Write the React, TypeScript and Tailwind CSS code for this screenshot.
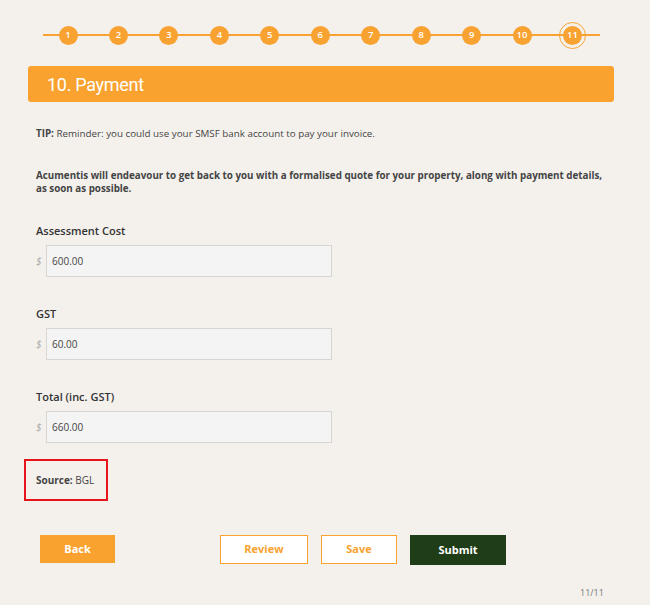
import React from "react";

const steps = [1, 2, 3, 4, 5, 6, 7, 8, 9, 10, 11];

function Field({ label, value }: { label: string; value: string }) {
  return (
    <div className="flex flex-col">
      <div className="text-[11px] font-semibold text-[#333] leading-[14px] h-[14px]">{label}</div>
      <div className="flex items-center mt-[7px]">
        <span className="w-[10px] text-[10px] italic text-[#aaa]">$</span>
        <div className="w-[286px] h-[32px] bg-[#f4f4f4] border border-[#d9d6d2] flex items-center pl-[5px] text-[10px] text-[#444]">
          {value}
        </div>
      </div>
    </div>
  );
}

export default function App() {
  return (
    <div
      className="w-[650px] h-[605px] bg-[#f4f1ed] relative overflow-hidden"
      style={{ fontFamily: '"Open Sans", sans-serif' }}
    >
      {/* stepper */}
      <div className="relative h-[70px]">
        <div className="absolute left-[43px] w-[557px] top-[34px] h-[2px] bg-[#f8a232]" />
        {steps.map((s, i) => (
          <div
            key={s}
            className="absolute top-[26px] w-[19px] h-[19px] rounded-full bg-[#f8a232] text-white text-[9.5px] font-semibold flex items-center justify-center"
            style={{ left: 58.5 + i * 50.45 }}
          >
            {s}
            {s === 11 && (
              <div className="absolute -inset-[4px] rounded-full border border-[#f8a232]" />
            )}
          </div>
        ))}
      </div>

      {/* header */}
      <div className="ml-[28px] mr-[36px] -mt-[4px] h-[36px] rounded-[3px] bg-[#f9a230] flex items-center pl-[19px]">
        <span className="text-white text-[18px] tracking-[-0.3px]" style={{ fontFamily: "Roboto, sans-serif" }}>
          10. Payment
        </span>
      </div>

      <div className="pl-[36px] pr-[20px]">
        <p className="mt-[25px] text-[9.8px] text-[#444] leading-[14px]">
          <span className="font-bold">TIP:</span> Reminder: you could use your SMSF bank account to pay your invoice.
        </p>
        <p className="mt-[28px] text-[9.8px] font-bold text-[#444] leading-[13px] whitespace-nowrap">
          Acumentis will endeavour to get back to you with a formalised quote for your property, along with payment details,
          <br />
          as soon as possible.
        </p>

        <div className="mt-[29px] flex flex-col gap-[30px]">
          <Field label="Assessment Cost" value="600.00" />
          <Field label="GST" value="60.00" />
          <Field label="Total (inc. GST)" value="660.00" />
        </div>
      </div>

      <div className="ml-[24px] mt-[16px] w-[84px] h-[42px] border-2 border-[#e8141c] flex items-center pl-[10px] text-[10px] text-[#444]">
        <span className="font-bold">Source:</span>&nbsp;BGL
      </div>

      <div className="relative h-[30px] mt-[34px]">
        <button className="absolute left-[40px] top-0 w-[75px] h-[28px] bg-[#f9a230] text-white text-[11px] font-bold">
          Back
        </button>
        <button className="absolute left-[220px] top-0 w-[88px] h-[29px] bg-white border border-[#f9a230] text-[#f9a230] text-[11px] font-bold">
          Review
        </button>
        <button className="absolute left-[321px] top-0 w-[76px] h-[29px] bg-white border border-[#f9a230] text-[#f9a230] text-[11px] font-bold">
          Save
        </button>
        <button className="absolute left-[410px] top-0 w-[96px] h-[30px] bg-[#1f3d17] text-white text-[11px] font-bold">
          Submit
        </button>
      </div>

      <div className="absolute left-[580px] top-[586px] text-[9px] text-[#777]">11/11</div>
    </div>
  );
}
